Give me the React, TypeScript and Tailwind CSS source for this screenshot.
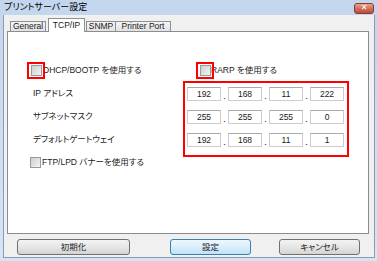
import React from "react";

const jp = "font-['Liberation_Sans','Noto_Sans_CJK_JP',sans-serif] [font-feature-settings:'palt'] text-[8.5px] leading-none text-[#1a1a1a]";

function Checkbox({ red }: { red?: boolean }) {
  return (
    <span className="relative inline-block w-[11px] h-[11px] shrink-0 border border-[#9a9a9a] bg-gradient-to-br from-[#cfcfcf] to-[#f4f4f4]">
      {red && <span className="absolute left-[-5px] top-[-4px] w-[18px] h-[17px] border-2 border-[#ff0000]" />}
    </span>
  );
}

function IpRow({ v }: { v: string[] }) {
  return (
    <div className="flex h-[14px]">
      {v.map((x, i) => (
        <React.Fragment key={i}>
          {i > 0 && (
            <div className="w-[7px] flex items-end justify-center">
              <span className="text-[9px] leading-[9px] font-['Liberation_Sans',sans-serif]">.</span>
            </div>
          )}
          <div className={"w-[34px] h-[14px] border border-[#cdcdcd] border-t-[#ababab] bg-white flex items-center justify-center " + jp}>
            {x}
          </div>
        </React.Fragment>
      ))}
    </div>
  );
}

export default function App() {
  return (
    <div className="w-[377px] h-[261px] bg-gradient-to-b from-[#c3d6ee] to-[#d6e4f5] flex flex-col pl-[3px] pr-[2px] pb-[3px] overflow-hidden">
      <div className="h-[15px] flex items-center justify-between pl-[1px] pr-[0px] shrink-0">
        <span className={jp + " text-[9px] text-black"}>プリントサーバー設定</span>
        <div className="w-[20px] h-[11px] mt-[1px] mr-[1px] rounded-[3px] border border-[#8b3a30] bg-gradient-to-b from-[#e8a493] via-[#d0705e] to-[#c04a37] flex items-center justify-center">
          <span className="text-white text-[8px] leading-none font-bold font-['DejaVu_Sans',sans-serif]">✕</span>
        </div>
      </div>
      <div className="flex-1 border border-t-0 border-[#8a9bb3] bg-[#f0f0f0] flex flex-col">
        <div className="h-[16px] flex items-end pl-[6px] shrink-0">
          <div className={"w-[36px] h-[10px] border border-b-0 border-[#8c8f96] bg-gradient-to-b from-[#f4f4f4] to-[#e2e2e2] flex items-center justify-center " + jp}>General</div>
          <div className={"ml-[2px] w-[37px] h-[14px] mb-[-1px] relative z-10 border border-b-0 border-[#8c8f96] bg-white flex items-start pt-[2px] justify-center " + jp}>TCP/IP</div>
          <div className={"ml-[1px] w-[30px] h-[10px] border border-b-0 border-[#8c8f96] bg-gradient-to-b from-[#f4f4f4] to-[#e2e2e2] flex items-center justify-center " + jp}>SNMP</div>
          <div className={"w-[55px] h-[10px] border border-b-0 border-l-0 border-[#8c8f96] bg-gradient-to-b from-[#f4f4f4] to-[#e2e2e2] flex items-center justify-center " + jp}>Printer Port</div>
        </div>
        <div className="ml-[3px] w-[362px] h-[203px] border border-[#898c95] bg-white flex flex-col shrink-0">
          <div className="mt-[32px] h-[12px] flex items-center">
            <div className="w-[192px] pl-[23px] flex items-center">
              <Checkbox red />
              <span className={"ml-[1px] " + jp}>DHCP/BOOTP を使用する</span>
            </div>
            <div className="flex items-center">
              <Checkbox red />
              <span className={"ml-[0px] " + jp}>RARP を使用する</span>
            </div>
          </div>
          <div className="mt-[5px] flex">
            <div className="w-[175px] pl-[25px] pt-[5px] flex flex-col gap-[9px]">
              <div className={"h-[14px] flex items-center " + jp}>IP アドレス</div>
              <div className={"h-[14px] flex items-center " + jp}>サブネットマスク</div>
              <div className={"h-[14px] flex items-center " + jp}>デフォルトゲートウェイ</div>
            </div>
            <div className="w-[166px] border-2 border-[#ff0000] pt-[4px] pb-[8px] pl-[2px] flex flex-col gap-[9px]">
              <IpRow v={["192", "168", "11", "222"]} />
              <IpRow v={["255", "255", "255", "0"]} />
              <IpRow v={["192", "168", "11", "1"]} />
            </div>
          </div>
          <div className="mt-[0px] pl-[22px] h-[11px] flex items-center">
            <Checkbox />
            <span className={"ml-[1px] " + jp}>FTP/LPD バナーを使用する</span>
          </div>
        </div>
        <div className="mt-[5px] flex items-center">
          <button className={"ml-[13px] w-[113px] h-[16px] rounded-[3px] border border-[#707070] bg-gradient-to-b from-[#f3f3f3] via-[#e6e6e6] to-[#d4d4d4] flex items-center justify-center " + jp}>初期化</button>
          <button className={"ml-[40px] w-[81px] h-[16px] rounded-[3px] border border-[#3c7fb1] bg-gradient-to-b from-[#eef7fd] via-[#d9eefb] to-[#bfe2f7] flex items-center justify-center " + jp}>設定</button>
          <button className={"ml-[28px] w-[81px] h-[16px] rounded-[3px] border border-[#707070] bg-gradient-to-b from-[#f3f3f3] via-[#e6e6e6] to-[#d4d4d4] flex items-center justify-center " + jp}>キャンセル</button>
        </div>
      </div>
    </div>
  );
}
